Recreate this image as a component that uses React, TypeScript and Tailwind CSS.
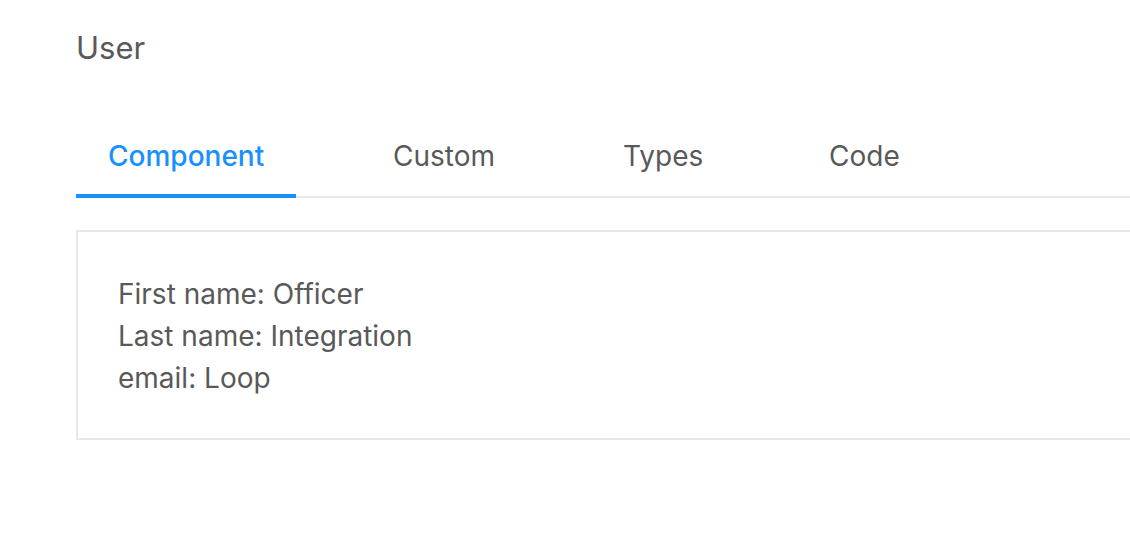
import { useState } from 'react';

const tabs = [
  { key: 'component', label: 'Component', width: 'w-[285px]' },
  { key: 'custom', label: 'Custom', width: 'w-[230px]' },
  { key: 'types', label: 'Types', width: 'w-[206px]' },
  { key: 'code', label: 'Code', width: 'w-[200px]' },
];

const user = { firstName: 'Officer', lastName: 'Integration', email: 'Loop' };

export default function App() {
  const [active, setActive] = useState('component');

  return (
    <div className="min-h-screen w-full overflow-hidden bg-white font-['Inter',sans-serif] text-[#595959]">
      <div className="w-[1200px] pl-[76px] pt-[25px]">
        <h1 className="text-[31px] leading-[45px] font-normal">User</h1>

        <div className="mt-[40px] flex border-b-2 border-[#e8e8e8]">
          {tabs.map(tab => (
            <div key={tab.key} className={tab.width}>
              <button
                type="button"
                onClick={() => setActive(tab.key)}
                className={`relative block w-[220px] px-[32px] pt-[25px] pb-[19px] text-left text-[28px] leading-[42px] ${
                  active === tab.key ? 'font-medium text-[#1890ff]' : 'text-[#595959]'
                }`}
              >
                {tab.label}
                {active === tab.key && (
                  <span className="absolute left-0 right-0 bottom-[-2px] h-[4px] bg-[#1890ff]" />
                )}
              </button>
            </div>
          ))}
        </div>

        <div className="mt-[32px] border-2 border-[#e8e8e8] px-[40px] pt-[41px] pb-[39px] text-[28px] leading-[42px]">
          <div>First name: {user.firstName}</div>
          <div>Last name: {user.lastName}</div>
          <div>email: {user.email}</div>
        </div>
      </div>
    </div>
  );
}
